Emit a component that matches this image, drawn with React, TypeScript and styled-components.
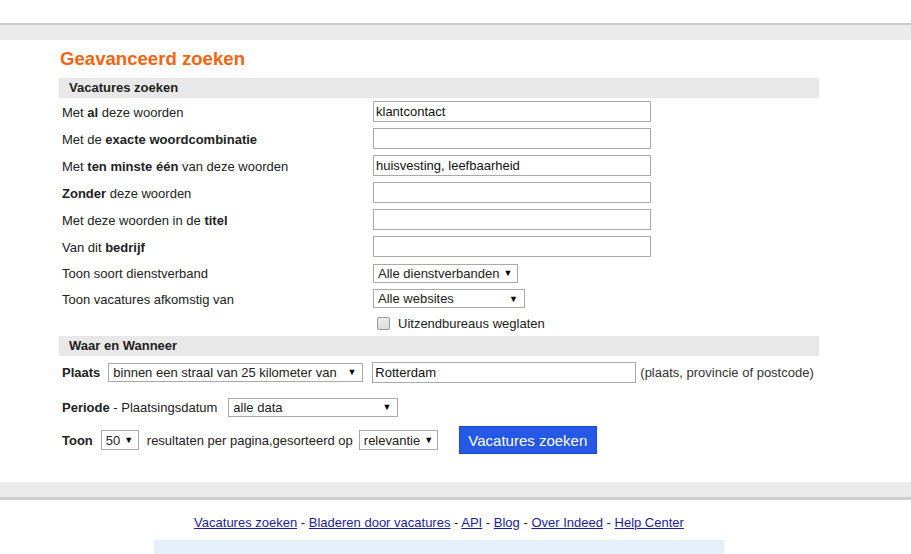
import React from "react";
import styled, { createGlobalStyle } from "styled-components";

const Global = createGlobalStyle`
  html, body { margin: 0; padding: 0; background: #fff; }
  body { font-family: "Liberation Sans", Arial, sans-serif; font-size: 13px; color: #222; }
`;

const TopSpace = styled.div`height: 23px;`;

const Band = styled.div<{ $top?: number; $bottom?: number }>`
  height: 15px;
  background: #ebebeb;
  border-top: ${(p) => p.$top ?? 0}px solid #cccccc;
  border-bottom: ${(p) => p.$bottom ?? 0}px solid #cccccc;
`;

const Main = styled.div`
  width: 760px;
  margin-left: 59px;
  padding-top: 8px;
  padding-bottom: 28px;
`;

const Title = styled.h1`
  margin: 0 0 8px 1px;
  font-size: 18.6px;
  line-height: 22px;
  font-weight: bold;
  color: #f4640f;
`;

const SectionHeader = styled.div`
  height: 20px;
  line-height: 20px;
  background: #e8e8e8;
  padding-left: 10px;
  font-weight: bold;
  font-size: 13px;
  color: #222;
`;

const FieldRow = styled.div<{ $h: number }>`
  display: grid;
  grid-template-columns: 314px 1fr;
  align-items: center;
  height: ${(p) => p.$h}px;
`;

const Label = styled.div`
  padding-left: 3px;
  padding-top: 1px;
`;

const TextInput = styled.input<{ $w: number }>`
  box-sizing: border-box;
  width: ${(p) => p.$w}px;
  height: 21px;
  border: 1px solid #a9a9a9;
  padding: 0 2px;
  margin: 0;
  font-family: "Liberation Sans", Arial, sans-serif;
  font-size: 13px;
  color: #111;
  background: #fff;
  outline: none;
`;

const SelectBox = styled.div<{ $w: number; $h?: number }>`
  box-sizing: border-box;
  width: ${(p) => p.$w}px;
  height: ${(p) => p.$h ?? 19}px;
  border: 1px solid #a9a9a9;
  background: #fff;
  display: flex;
  align-items: center;
  justify-content: space-between;
  padding: 0 6px 0 4px;
  font-size: 13px;
  color: #222;
  white-space: nowrap;
  flex-shrink: 0;
`;

const Arrow = styled.span`
  font-size: 9px;
  color: #000;
  margin-left: 4px;
`;

const CheckRow = styled.div`
  display: flex;
  align-items: center;
  gap: 8px;
  padding-left: 4px;
  font-size: 13px;
`;

const CheckBox = styled.span`
  display: inline-block;
  box-sizing: border-box;
  width: 13px;
  height: 13px;
  border: 1px solid #9a9a9a;
  border-radius: 2px;
  background: linear-gradient(#ededed, #dcdcdc);
`;

const InlineRow = styled.div<{ $mt: number; $h: number }>`
  display: flex;
  align-items: center;
  margin-top: ${(p) => p.$mt}px;
  height: ${(p) => p.$h}px;
  padding-left: 3px;
  white-space: nowrap;
`;

const Spacer = styled.span<{ $w: number }>`
  display: inline-block;
  width: ${(p) => p.$w}px;
  flex-shrink: 0;
`;

const Hint = styled.span`
  margin-left: 4px;
  color: #333;
`;

const SearchButton = styled.button`
  box-sizing: border-box;
  width: 138px;
  height: 28px;
  margin-left: 21px;
  background: #2458e5;
  border: 1px solid #1d47c4;
  color: #fff;
  font-family: "Liberation Sans", Arial, sans-serif;
  font-size: 15px;
  padding: 0;
  cursor: pointer;
`;

const Footer = styled.div`
  width: 570px;
  margin-left: 154px;
  padding-top: 15px;
  text-align: center;
`;

const Links = styled.div`
  font-size: 13px;
  line-height: 16px;
  color: #222;
`;

const FooterLink = styled.a`
  color: #1c1c9c;
  text-decoration: underline;
`;

const InfoBox = styled.div`
  margin-top: 9px;
  height: 30px;
  background: #e5f0fc;
`;

const Select = ({ w, h, children }: { w: number; h?: number; children: React.ReactNode }) => (
  <SelectBox $w={w} $h={h}>
    <span>{children}</span>
    <Arrow>▼</Arrow>
  </SelectBox>
);

const links = ["Vacatures zoeken", "Bladeren door vacatures", "API", "Blog", "Over Indeed", "Help Center"];

export default function App() {
  return (
    <>
      <Global />
      <TopSpace />
      <Band $top={2} />
      <Main>
        <Title>Geavanceerd zoeken</Title>
        <SectionHeader>Vacatures zoeken</SectionHeader>
        <FieldRow $h={27}>
          <Label>Met <b>al</b> deze woorden</Label>
          <TextInput $w={278} value="klantcontact" readOnly />
        </FieldRow>
        <FieldRow $h={27}>
          <Label>Met de <b>exacte woordcombinatie</b></Label>
          <TextInput $w={278} value="" readOnly />
        </FieldRow>
        <FieldRow $h={27}>
          <Label>Met <b>ten minste één</b> van deze woorden</Label>
          <TextInput $w={278} value="huisvesting, leefbaarheid" readOnly />
        </FieldRow>
        <FieldRow $h={27}>
          <Label><b>Zonder</b> deze woorden</Label>
          <TextInput $w={278} value="" readOnly />
        </FieldRow>
        <FieldRow $h={27}>
          <Label>Met deze woorden in de <b>titel</b></Label>
          <TextInput $w={278} value="" readOnly />
        </FieldRow>
        <FieldRow $h={27}>
          <Label>Van dit <b>bedrijf</b></Label>
          <TextInput $w={278} value="" readOnly />
        </FieldRow>
        <FieldRow $h={26}>
          <Label>Toon soort dienstverband</Label>
          <Select w={145}>Alle dienstverbanden</Select>
        </FieldRow>
        <FieldRow $h={25}>
          <Label>Toon vacatures afkomstig van</Label>
          <Select w={152}>Alle websites</Select>
        </FieldRow>
        <FieldRow $h={25}>
          <Label />
          <CheckRow>
            <CheckBox />
            <span>Uitzendbureaus weglaten</span>
          </CheckRow>
        </FieldRow>
        <SectionHeader>Waar en Wanneer</SectionHeader>
        <InlineRow $mt={5} $h={22}>
          <b>Plaats</b>
          <Spacer $w={8} />
          <Select w={255}>binnen een straal van 25 kilometer van</Select>
          <Spacer $w={9} />
          <TextInput $w={264} value="Rotterdam" readOnly />
          <Hint>(plaats, provincie of postcode)</Hint>
        </InlineRow>
        <InlineRow $mt={13} $h={22}>
          <b>Periode</b>
          <span>&nbsp;- Plaatsingsdatum</span>
          <Spacer $w={11} />
          <Select w={170}>alle data</Select>
        </InlineRow>
        <InlineRow $mt={8} $h={28}>
          <b>Toon</b>
          <Spacer $w={8} />
          <Select w={38} h={20}>50</Select>
          <Spacer $w={8} />
          <span>resultaten per pagina,gesorteerd op</span>
          <Spacer $w={6} />
          <Select w={79} h={20}>relevantie</Select>
          <SearchButton>Vacatures zoeken</SearchButton>
        </InlineRow>
      </Main>
      <Band $bottom={3} />
      <Footer>
        <Links>
          {links.map((l, i) => (
            <React.Fragment key={l}>
              {i > 0 && " - "}
              <FooterLink href="#">{l}</FooterLink>
            </React.Fragment>
          ))}
        </Links>
        <InfoBox />
      </Footer>
    </>
  );
}
